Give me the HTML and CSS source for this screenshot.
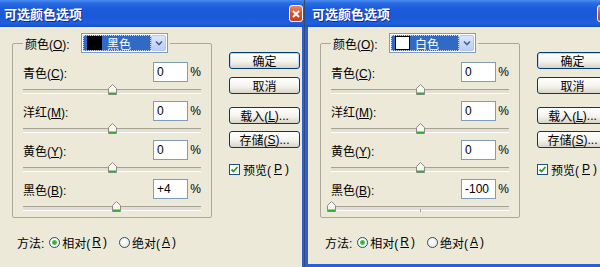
FILE: index.html
```html
<!DOCTYPE html>
<html lang="zh-CN">
<head>
  <meta charset="UTF-8">
  <title>可选颜色选项</title>
  <link rel="stylesheet" href="styles.css">
</head>
<body>
  <div class="desktop">

    <!-- 左边: 黑色 -->
    <div class="dialog dialog-back">
      <div class="titlebar">
        <span class="title">可选颜色选项</span>
        <span class="close"><svg width="8" height="8" viewBox="0 0 8 8"><path d="M1 1L7 7M7 1L1 7" stroke="#fff" stroke-width="2"/></svg></span>
      </div>
      <div class="client">
        <div class="main">
          <fieldset class="group">
            <legend class="legend">
              <span class="legend-label">颜色(<u>O</u>):</span>
              <span class="select">
                <span class="select-value"><span class="swatch swatch-black"></span>黑色</span>
                <span class="select-arrow"><svg width="8" height="6" viewBox="0 0 8 6"><path d="M1 1.5L4 4.5L7 1.5" fill="none" stroke="#4d6185" stroke-width="1.6"/></svg></span>
              </span>
            </legend>
            <div class="row"><span class="label">青色(<u>C</u>):</span><span class="field">0</span><span class="pct">%</span></div>
            <div class="slider"><span class="thumb" style="left: 50%"><svg width="9" height="11" viewBox="0 0 9 11"><path d="M0.5 10.5V4.5L4.5 0.5L8.5 4.5V10.5Z" fill="#f6f6f2" stroke="#8c8c84"/><rect x="1" y="8.5" width="7" height="1.8" fill="#2fae2f"/></svg></span></div>
            <div class="row"><span class="label">洋红(<u>M</u>):</span><span class="field">0</span><span class="pct">%</span></div>
            <div class="slider"><span class="thumb" style="left: 50%"><svg width="9" height="11" viewBox="0 0 9 11"><path d="M0.5 10.5V4.5L4.5 0.5L8.5 4.5V10.5Z" fill="#f6f6f2" stroke="#8c8c84"/><rect x="1" y="8.5" width="7" height="1.8" fill="#2fae2f"/></svg></span></div>
            <div class="row"><span class="label">黄色(<u>Y</u>):</span><span class="field">0</span><span class="pct">%</span></div>
            <div class="slider"><span class="thumb" style="left: 50%"><svg width="9" height="11" viewBox="0 0 9 11"><path d="M0.5 10.5V4.5L4.5 0.5L8.5 4.5V10.5Z" fill="#f6f6f2" stroke="#8c8c84"/><rect x="1" y="8.5" width="7" height="1.8" fill="#2fae2f"/></svg></span></div>
            <div class="row"><span class="label">黑色(<u>B</u>):</span><span class="field">+4</span><span class="pct">%</span></div>
            <div class="slider slider-last"><span class="thumb" style="left: 52%"><svg width="9" height="11" viewBox="0 0 9 11"><path d="M0.5 10.5V4.5L4.5 0.5L8.5 4.5V10.5Z" fill="#f6f6f2" stroke="#8c8c84"/><rect x="1" y="8.5" width="7" height="1.8" fill="#2fae2f"/></svg></span></div>
          </fieldset>
          <div class="method">
            <span class="method-label">方法:</span>
            <span class="radio"><span class="radio-dot checked"></span>相对(<u>R</u>)</span>
            <span class="radio"><span class="radio-dot"></span>绝对(<u>A</u>)</span>
          </div>
        </div>
        <div class="buttons">
          <span class="btn btn-default">确定</span>
          <span class="btn btn-cancel">取消</span>
          <span class="btn btn-load">载入(<u>L</u>)...</span>
          <span class="btn btn-save">存储(<u>S</u>)...</span>
          <span class="check"><span class="check-box"><svg width="9" height="9" viewBox="0 0 9 9"><path d="M1.5 4.5L3.5 6.5L7.5 2" fill="none" stroke="#21a121" stroke-width="1.8"/></svg></span>预览(<u>P</u>)</span>
        </div>
      </div>
    </div>

    <!-- 右边: 白色 -->
    <div class="dialog dialog-front">
      <div class="titlebar">
        <span class="title">可选颜色选项</span>
        <span class="close"><svg width="8" height="8" viewBox="0 0 8 8"><path d="M1 1L7 7M7 1L1 7" stroke="#fff" stroke-width="2"/></svg></span>
      </div>
      <div class="client">
        <div class="main">
          <fieldset class="group">
            <legend class="legend">
              <span class="legend-label">颜色(<u>O</u>):</span>
              <span class="select">
                <span class="select-value"><span class="swatch swatch-white"></span>白色</span>
                <span class="select-arrow"><svg width="8" height="6" viewBox="0 0 8 6"><path d="M1 1.5L4 4.5L7 1.5" fill="none" stroke="#4d6185" stroke-width="1.6"/></svg></span>
              </span>
            </legend>
            <div class="row"><span class="label">青色(<u>C</u>):</span><span class="field">0</span><span class="pct">%</span></div>
            <div class="slider"><span class="thumb" style="left: 50%"><svg width="9" height="11" viewBox="0 0 9 11"><path d="M0.5 10.5V4.5L4.5 0.5L8.5 4.5V10.5Z" fill="#f6f6f2" stroke="#8c8c84"/><rect x="1" y="8.5" width="7" height="1.8" fill="#2fae2f"/></svg></span></div>
            <div class="row"><span class="label">洋红(<u>M</u>):</span><span class="field">0</span><span class="pct">%</span></div>
            <div class="slider"><span class="thumb" style="left: 50%"><svg width="9" height="11" viewBox="0 0 9 11"><path d="M0.5 10.5V4.5L4.5 0.5L8.5 4.5V10.5Z" fill="#f6f6f2" stroke="#8c8c84"/><rect x="1" y="8.5" width="7" height="1.8" fill="#2fae2f"/></svg></span></div>
            <div class="row"><span class="label">黄色(<u>Y</u>):</span><span class="field">0</span><span class="pct">%</span></div>
            <div class="slider"><span class="thumb" style="left: 50%"><svg width="9" height="11" viewBox="0 0 9 11"><path d="M0.5 10.5V4.5L4.5 0.5L8.5 4.5V10.5Z" fill="#f6f6f2" stroke="#8c8c84"/><rect x="1" y="8.5" width="7" height="1.8" fill="#2fae2f"/></svg></span></div>
            <div class="row"><span class="label">黑色(<u>B</u>):</span><span class="field">-100</span><span class="pct">%</span></div>
            <div class="slider slider-last"><span class="thumb" style="left: 0%"><svg width="9" height="11" viewBox="0 0 9 11"><path d="M0.5 10.5V4.5L4.5 0.5L8.5 4.5V10.5Z" fill="#f6f6f2" stroke="#8c8c84"/><rect x="1" y="8.5" width="7" height="1.8" fill="#2fae2f"/></svg></span></div>
          </fieldset>
          <div class="method">
            <span class="method-label">方法:</span>
            <span class="radio"><span class="radio-dot checked"></span>相对(<u>R</u>)</span>
            <span class="radio"><span class="radio-dot"></span>绝对(<u>A</u>)</span>
          </div>
        </div>
        <div class="buttons">
          <span class="btn btn-default">确定</span>
          <span class="btn btn-cancel">取消</span>
          <span class="btn btn-load">载入(<u>L</u>)...</span>
          <span class="btn btn-save">存储(<u>S</u>)...</span>
          <span class="check"><span class="check-box"><svg width="9" height="9" viewBox="0 0 9 9"><path d="M1.5 4.5L3.5 6.5L7.5 2" fill="none" stroke="#21a121" stroke-width="1.8"/></svg></span>预览(<u>P</u>)</span>
        </div>
      </div>
    </div>

  </div>
</body>
</html>
```

FILE: styles.css
```css
* {
  margin: 0;
  padding: 0;
  box-sizing: border-box;
}
html, body {
  height: 100%;
}
body {
  background: #ece9d8;
  font-family: "Liberation Sans", "Noto Sans CJK SC", sans-serif;
  font-size: 12px;
  color: #000;
  overflow: hidden;
}
u {
  text-decoration: underline;
}

.desktop {
  display: flex;
  align-items: flex-start;
  margin-left: -3px;
  height: 267px;
}
.dialog {
  width: 308px;
  flex: none;
  display: flex;
  flex-direction: column;
}
.dialog-back {
  height: 280px;
}
.dialog-front {
  height: 267px;
  box-shadow: -1px 0 #3c4a6a;
}

/* title bar */
.titlebar {
  height: 27px;
  flex: none;
  display: flex;
  align-items: center;
  justify-content: space-between;
  padding: 0 2px 0 7px;
  background: linear-gradient(to bottom, #4a8ef2 0, #2b6de4 3px, #1c5ddb 8px, #1a59d6 60%, #1e60df 85%, #1650c6 100%);
}
.title {
  color: #fff;
  font-family: "Noto Sans CJK SC", sans-serif;
  font-weight: bold;
  font-size: 13px;
  text-shadow: 1px 1px #0f2c8a;
}
.close {
  align-self: flex-start;
  margin-top: 5px;
  width: 14px;
  height: 17px;
  border: 1px solid #fff;
  border-radius: 3px;
  background: linear-gradient(to bottom, #e98a6c, #d9502a 50%, #c8401c);
  display: flex;
  align-items: center;
  justify-content: center;
}

/* client area */
.client {
  flex: 1;
  display: flex;
  background: #ece9d8;
  border: 3px solid #2a5fdc;
  border-top: 0;
  padding: 6px 0 0 12px;
}
.main {
  width: 200px;
  display: flex;
  flex-direction: column;
}

.group {
  border: 1px solid #aca899;
  border-radius: 2px;
  padding: 9px 10px 0 10px;
  min-width: 0;
}
.legend {
  display: flex;
  align-items: center;
  height: 20px;
  padding: 0 2px;
}
.legend-label {
  width: 56px;
}
.select {
  width: 87px;
  height: 20px;
  display: flex;
  padding: 1px;
  border: 1px solid #7f9db9;
  background: #fff;
}
.select-value {
  flex: 1;
  display: flex;
  align-items: center;
  gap: 5px;
  padding-left: 4px;
  background: #316ac5;
  color: #fff;
  outline: 1px dotted #c8d4ee;
  outline-offset: -1px;
}
.swatch {
  width: 15px;
  height: 14px;
}
.swatch-black {
  background: #000;
}
.swatch-white {
  background: #fff;
  border: 1px solid #000;
}
.select-arrow {
  width: 15px;
  display: flex;
  align-items: center;
  justify-content: center;
  background: linear-gradient(to bottom, #dce6fd, #b9cdfa);
  border: 1px solid #b4c6ee;
  border-radius: 2px;
}

.row {
  display: flex;
  align-items: center;
  height: 20px;
}
.label {
  flex: 1;
}
.field {
  width: 35px;
  height: 20px;
  border: 1px solid #7f9db9;
  background: #fff;
  padding: 0 3px;
  line-height: 18px;
}
.pct {
  width: 13px;
  text-align: right;
}

.slider {
  position: relative;
  height: 19px;
}
.slider-last {
  height: 18px;
}
.slider::before {
  content: "";
  position: absolute;
  left: 0;
  right: 0;
  top: 7px;
  height: 3px;
  border-top: 1px solid #a5a294;
  border-bottom: 1px solid #fff;
  background: #e2dfd2;
}
.slider::after {
  content: "";
  position: absolute;
  left: 50%;
  top: 10px;
  width: 1px;
  height: 3px;
  background: #a5a294;
}
.thumb {
  position: absolute;
  top: 2px;
  margin-left: -4px;
  width: 9px;
  height: 11px;
  z-index: 1;
}
.thumb svg {
  display: block;
}

.method {
  display: flex;
  align-items: center;
  height: 16px;
  margin-top: 16px;
  padding-left: 5px;
}
.method-label {
  margin-right: 5px;
}
.radio {
  display: flex;
  align-items: center;
  gap: 2px;
  margin-right: 12px;
}
.radio-dot {
  width: 11px;
  height: 11px;
  border-radius: 50%;
  border: 1px solid #1c5180;
  background: radial-gradient(circle at 40% 40%, #fff, #e3e1d6);
}
.radio-dot.checked {
  background: radial-gradient(circle, #2aa52a 0, #4cc24c 2px, #fff 3px, #e3e1d6 100%);
}

/* right column */
.buttons {
  width: 71px;
  margin-left: 17px;
  padding-top: 19px;
  display: flex;
  flex-direction: column;
  flex: none;
}
.btn {
  height: 17px;
  display: flex;
  align-items: center;
  justify-content: center;
  border: 1px solid #003c74;
  border-radius: 3px;
  background: linear-gradient(to bottom, #fff, #f4f3ee 55%, #d8d3c7);
}
.btn-default {
  box-shadow: inset 0 0 0 1px #c4d4f4;
}
.btn-cancel {
  margin-top: 8px;
}
.btn-load {
  margin-top: 13px;
}
.btn-save {
  margin-top: 7px;
}
.check {
  display: flex;
  align-items: center;
  gap: 3px;
  margin-top: 14px;
  height: 14px;
}
.check-box {
  width: 11px;
  height: 11px;
  border: 1px solid #1c5180;
  background: #fff;
  display: flex;
  align-items: center;
  justify-content: center;
}
.check-box svg {
  display: block;
}
```
